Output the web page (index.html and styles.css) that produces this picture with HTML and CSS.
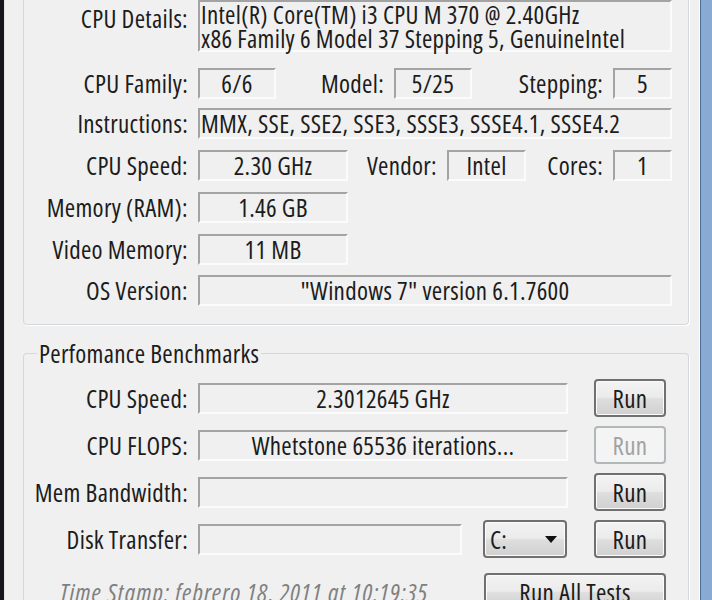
FILE: index.html
```html
<!DOCTYPE html>
<html lang="en">
<head>
    <meta charset="UTF-8" />
    <meta name="viewport" content="width=device-width, initial-scale=1.0" />
    <title>System Information</title>
    <link rel="stylesheet" href="styles.css">
</head>
<body>
    <div class="window">
        <div class="edge-left"></div>
        <div class="client">
            <fieldset class="group group-sys">
                <legend>System Information</legend>
                <div class="row row-details">
                    <span class="lbl">CPU Details:</span>
                    <div class="field field-multi">Intel(R) Core(TM) i3 CPU M 370 @ 2.40GHz<br>x86 Family 6 Model 37 Stepping 5, GenuineIntel</div>
                </div>
                <div class="row mt-16">
                    <span class="lbl">CPU Family:</span>
                    <div class="field w-78">6/6</div>
                    <span class="lbl lbl-model">Model:</span>
                    <div class="field w-78">5/25</div>
                    <span class="lbl lbl-stepping">Stepping:</span>
                    <div class="field w-59">5</div>
                </div>
                <div class="row mt-9">
                    <span class="lbl">Instructions:</span>
                    <div class="field field-left grow">MMX, SSE, SSE2, SSE3, SSSE3, SSSE4.1, SSSE4.2</div>
                </div>
                <div class="row">
                    <span class="lbl">CPU Speed:</span>
                    <div class="field w-150">2.30 GHz</div>
                    <span class="lbl lbl-vendor">Vendor:</span>
                    <div class="field w-79">Intel</div>
                    <span class="lbl lbl-cores">Cores:</span>
                    <div class="field w-59">1</div>
                </div>
                <div class="row">
                    <span class="lbl">Memory (RAM):</span>
                    <div class="field w-150">1.46 GB</div>
                </div>
                <div class="row">
                    <span class="lbl">Video Memory:</span>
                    <div class="field w-150">11 MB</div>
                </div>
                <div class="row mt-10">
                    <span class="lbl">OS Version:</span>
                    <div class="field grow">"Windows 7" version 6.1.7600</div>
                </div>
            </fieldset>

            <fieldset class="group group-bench">
                <legend>Perfomance Benchmarks</legend>
                <div class="bench-row">
                    <span class="lbl">CPU Speed:</span>
                    <div class="field w-370">2.3012645 GHz</div>
                    <button class="btn btn-run">Run</button>
                </div>
                <div class="bench-row mt-10">
                    <span class="lbl">CPU FLOPS:</span>
                    <div class="field w-370">Whetstone 65536 iterations...</div>
                    <button class="btn btn-run" disabled>Run</button>
                </div>
                <div class="bench-row">
                    <span class="lbl">Mem Bandwidth:</span>
                    <div class="field w-370"></div>
                    <button class="btn btn-run">Run</button>
                </div>
                <div class="bench-row">
                    <span class="lbl">Disk Transfer:</span>
                    <div class="field w-264"></div>
                    <div class="btn combo">
                        <span>C:</span>
                        <span class="combo-arrow"></span>
                    </div>
                    <button class="btn btn-run btn-disk">Run</button>
                </div>
                <div class="bench-row stamp-row">
                    <span class="stamp">Time Stamp: febrero 18, 2011 at 10:19:35</span>
                    <button class="btn btn-all">Run All Tests</button>
                </div>
            </fieldset>
        </div>
        <div class="edge-right"></div>
    </div>
</body>
</html>
```

FILE: styles.css
```css
body {
    margin: 0;
    background-color: #f0f0f0;
    font-family: "Open Sans", "Liberation Sans", sans-serif;
    font-stretch: 75%;
    font-size: 25px;
    letter-spacing: 0.3px;
    line-height: 26px;
    color: #1c1c1c;
    overflow: hidden;
}
.window {
    display: flex;
    height: 600px;
}
.edge-left {
    flex: none;
    width: 5px;
    background: linear-gradient(to right, #16161f 0 4px, #e4e4e4 4px);
}
.edge-right {
    flex: none;
    width: 13px;
    background: linear-gradient(to right, #ffffff 0 1px, #4d6f97 1px 2px, #88aad3 2px);
}
.client {
    flex: 1;
    min-width: 0;
    margin-top: -40px;
}
.group {
    margin: 0 10px 0 18px;
    padding: 14px 0 18px 0;
    border: 1px solid #d3d8dc;
    border-radius: 4px;
    box-shadow: 1px 1px 0 #ffffff;
    min-width: 0;
}
.group legend {
    margin-left: 13px;
    padding: 0 2px;
    line-height: 26px;
}
.group-bench {
    margin-top: 15px;
    padding: 13px 22px 0 0;
    border-bottom: none;
    border-radius: 4px 4px 0 0;
}
.row {
    display: flex;
    align-items: center;
    padding-right: 16px;
    margin-top: 11px;
}
.row-details {
    align-items: flex-start;
    margin-top: 0;
}
.row-details .lbl {
    padding-top: 4px;
}
.mt-16 { margin-top: 16px; }
.mt-9 { margin-top: 9px; }
.mt-10 { margin-top: 10px; }
.lbl {
    flex: none;
    width: 164px;
    margin-right: 10px;
    text-align: right;
    white-space: nowrap;
    line-height: 29px;
}
.lbl-model { width: 108px; }
.lbl-stepping { width: 131px; }
.lbl-vendor { width: 89px; }
.lbl-cores { width: 77px; }
.field {
    flex: none;
    box-sizing: border-box;
    height: 31px;
    border: 2px solid;
    border-color: #a3a3a3 #fbfbfb #fbfbfb #a3a3a3;
    line-height: 26px;
    text-align: center;
    white-space: nowrap;
}
.field-multi {
    flex: 1;
    height: 52px;
    line-height: 24px;
    text-align: left;
    padding-left: 1px;
}
.field-left {
    text-align: left;
    padding-left: 1px;
}
.grow { flex: 1; }
.w-59 { width: 59px; }
.w-78 { width: 78px; }
.w-79 { width: 79px; }
.w-150 { width: 150px; }
.w-264 { width: 264px; }
.w-370 { width: 370px; }
.bench-row {
    display: flex;
    align-items: center;
    height: 38px;
    margin-top: 9px;
}
.bench-row:first-of-type { margin-top: 0; }
.btn {
    flex: none;
    box-sizing: border-box;
    height: 38px;
    border: 2px solid #707070;
    border-radius: 4px;
    background: linear-gradient(#f3f3f3 0%, #ebebeb 48%, #dedede 52%, #d0d0d0 100%);
    box-shadow: inset 0 0 0 1px #fbfbfb;
    font: inherit;
    letter-spacing: inherit;
    color: #1c1c1c;
    padding: 0;
}
.btn-run {
    width: 72px;
    margin-left: 26px;
}
.btn-run:disabled {
    border-color: #b2b7ba;
    background: #f4f4f4;
    box-shadow: none;
    color: #a2a2a2;
}
.btn-disk { margin-left: 27px; }
.combo {
    width: 84px;
    margin-left: 21px;
    display: flex;
    align-items: center;
    justify-content: space-between;
    padding: 0 8px 0 5px;
}
.combo-arrow {
    width: 0;
    height: 0;
    border-left: 6px solid transparent;
    border-right: 6px solid transparent;
    border-top: 7px solid #111;
}
.stamp-row {
    margin-top: 15px;
}
.stamp {
    padding-left: 36px;
    font-style: italic;
    letter-spacing: 1.1px;
    color: #808080;
    white-space: nowrap;
}
.btn-all {
    width: 182px;
    margin-left: auto;
}
```
